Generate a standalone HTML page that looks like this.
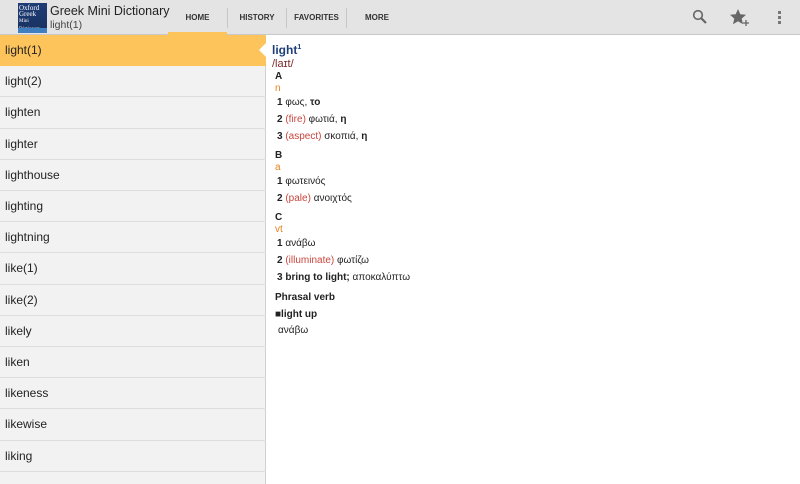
<!DOCTYPE html>
<html><head><meta charset="utf-8"><style>
*{margin:0;padding:0;box-sizing:border-box}
body{width:800px;height:484px;overflow:hidden;background:#fff;font-family:"Liberation Sans","DejaVu Sans",sans-serif;position:relative}
.hdr{position:absolute;left:0;top:0;width:800px;height:35px;background:#e4e4e4;border-bottom:1px solid #c8c8c8}
.logo{position:absolute;left:18px;top:3px;width:29px;height:30px;background:linear-gradient(#1f3d75,#17305f);color:#fff;font-family:"Liberation Serif",serif;font-size:7px;line-height:6px;padding:2px 1px}
.logo:after{content:"";position:absolute;left:0;right:0;bottom:0;height:5px;background:#3f7fbf}
.title{position:absolute;left:50px;top:4px;font-size:12.5px;color:#222}
.sub{position:absolute;left:50px;top:19px;font-size:10.5px;color:#444}
.tab{position:absolute;top:0;height:35px;font-size:8px;font-weight:bold;color:#333;text-align:center;line-height:35px}
.sep{position:absolute;top:8px;width:1px;height:20px;background:#c6c6c6}
.list{position:absolute;left:0;top:35px;width:266px;height:449px;background:#f2f2f2;border-right:1px solid #d0d0d0}
.row{position:absolute;left:0;width:266px;height:31.2px;border-bottom:1px solid #dedede;font-size:12px;color:#222;line-height:31px;padding-left:5px}
.sel{background:#fcc45a;border-bottom:none}
.arrow{position:absolute;left:259px;top:42px;width:0;height:0;border-top:8px solid transparent;border-bottom:8px solid transparent;border-right:8px solid #fff}
.c{position:absolute;left:275px;font-size:10px;color:#222;white-space:nowrap}
.o{color:#e8821e}.r{color:#c9453d}.b{font-weight:bold}
</style></head><body>
<div class="hdr">
<div class="logo">Oxford<br>Greek<br><span style="font-size:5px">Mini<br>Dictionary</span></div>
<div class="title">Greek Mini Dictionary</div>
<div class="sub">light(1)</div>
<div class="tab" style="left:168px;width:59px">HOME</div>
<div style="position:absolute;left:168px;top:32px;width:59px;height:3px;background:#fcc45a"></div>
<div class="sep" style="left:227px"></div>
<div class="tab" style="left:228px;width:58px">HISTORY</div>
<div class="sep" style="left:286px"></div>
<div class="tab" style="left:287px;width:59px">FAVORITES</div>
<div class="sep" style="left:346px"></div>
<div class="tab" style="left:347px;width:60px">MORE</div>
<svg style="position:absolute;left:692px;top:9px" width="16" height="16" viewBox="0 0 16 16"><circle cx="6" cy="6" r="4.3" fill="none" stroke="#666" stroke-width="1.6"/><path d="M9 9l5 5" stroke="#666" stroke-width="2.2"/></svg>
<svg style="position:absolute;left:729px;top:8px" width="22" height="18" viewBox="0 0 22 18"><path d="M9 1l2.3 5.3 5.7.5-4.3 3.8 1.3 5.6L9 13.2 4 16.2l1.3-5.6L1 6.8l5.7-.5z" fill="#666"/><path d="M17 12v6M14 15h6" stroke="#666" stroke-width="1.3"/></svg>
<div style="position:absolute;left:778px;top:11px;width:3px;height:3px;background:#777;box-shadow:0 5px 0 #777,0 10px 0 #777"></div>
</div>
<div class="list">
<div class="row sel" style="top:0">light(1)</div>
<div class="row" style="top:31.2px">light(2)</div>
<div class="row" style="top:62.4px">lighten</div>
<div class="row" style="top:93.6px">lighter</div>
<div class="row" style="top:124.8px">lighthouse</div>
<div class="row" style="top:156px">lighting</div>
<div class="row" style="top:187.2px">lightning</div>
<div class="row" style="top:218.4px">like(1)</div>
<div class="row" style="top:249.6px">like(2)</div>
<div class="row" style="top:280.8px">likely</div>
<div class="row" style="top:312px">liken</div>
<div class="row" style="top:343.2px">likeness</div>
<div class="row" style="top:374.4px">likewise</div>
<div class="row" style="top:405.6px">liking</div>
</div>
<div class="arrow"></div>
<div class="c" style="left:272px;top:43px;font-size:12px;color:#1f3f7a;font-weight:bold">light<sup style="font-size:7px">1</sup></div>
<div class="c" style="left:272px;top:58px;font-size:11px;color:#7a2a2a">/laɪt/</div>
<div class="c b" style="top:71px">A</div>
<div class="c o" style="top:83px">n</div>
<div class="c" style="left:277px;top:97px"><b>1</b> φως, <b>το</b></div>
<div class="c" style="left:277px;top:114px"><b>2</b> <span class="r">(fire)</span> φωτιά, <b>η</b></div>
<div class="c" style="left:277px;top:131px"><b>3</b> <span class="r">(aspect)</span> σκοπιά, <b>η</b></div>
<div class="c b" style="top:150px">B</div>
<div class="c o" style="top:162px">a</div>
<div class="c" style="left:277px;top:176px"><b>1</b> φωτεινός</div>
<div class="c" style="left:277px;top:193px"><b>2</b> <span class="r">(pale)</span> ανοιχτός</div>
<div class="c b" style="top:212px">C</div>
<div class="c o" style="top:224px">vt</div>
<div class="c" style="left:277px;top:238px"><b>1</b> ανάβω</div>
<div class="c" style="left:277px;top:255px"><b>2</b> <span class="r">(illuminate)</span> φωτίζω</div>
<div class="c" style="left:277px;top:272px"><b>3 bring to light;</b> αποκαλύπτω</div>
<div class="c b" style="top:292px">Phrasal verb</div>
<div class="c b" style="top:309px">■light up</div>
<div class="c" style="left:278px;top:325px">ανάβω</div>
</body></html>
